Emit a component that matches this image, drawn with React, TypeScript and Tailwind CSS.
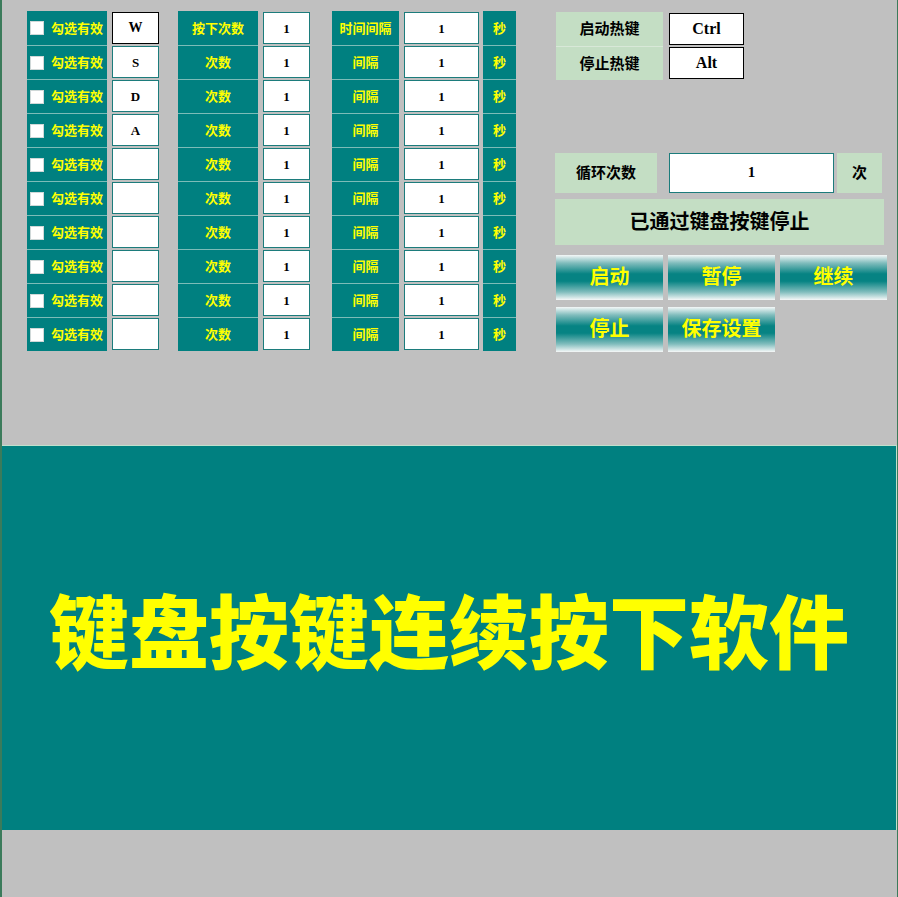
const keys = ["W", "S", "D", "A", "", "", "", "", "", ""];

function TealCell({ w, first, children }: { w: string; first: boolean; children: React.ReactNode }) {
  return (
    <div
      className={
        first
          ? `${w} h-full bg-[#008080] flex items-center justify-center text-[13px] leading-none font-bold text-[#ffff00] pb-[2px]`
          : `${w} h-full bg-[#008080] border-t border-[#7cbcb8] flex items-center justify-center text-[13px] leading-none font-bold text-[#ffff00] pb-[2px]`
      }
    >
      {children}
    </div>
  );
}

function InputCell({ w, value, active }: { w: string; value: string; active?: boolean }) {
  return (
    <div className={`${w} h-full py-px`}>
      <div
        className={
          active
            ? "h-full bg-white border-[1.5px] border-black flex items-center justify-center font-['Liberation_Serif',serif] font-bold text-[14px] leading-none text-black"
            : "h-full bg-white border border-[#1c7c7c] flex items-center justify-center font-['Liberation_Serif',serif] font-bold text-[13px] leading-none text-black"
        }
      >
        {value}
      </div>
    </div>
  );
}

function KeyTable() {
  return (
    <div className="mt-[11px] flex flex-col">
      {keys.map((k, i) => (
        <div key={i} className="h-[34px] flex">
          <TealCell w="w-[80px]" first={i === 0}>
            <div className="w-full flex items-center pl-[3px] gap-[5px]">
              <span className="w-[14px] h-[14px] mt-[2px] bg-white border border-[#cfd8d8] shrink-0" />
              <span className="flex-1 text-center pr-[2px]">勾选有效</span>
            </div>
          </TealCell>
          <div className="ml-[5px]">
            <InputCell w="w-[47px]" value={k} active={i === 0} />
          </div>
          <div className="ml-[19px]">
            <TealCell w="w-[80px]" first={i === 0}>
              {i === 0 ? "按下次数" : "次数"}
            </TealCell>
          </div>
          <div className="ml-[5px]">
            <InputCell w="w-[47px]" value="1" />
          </div>
          <div className="ml-[22px]">
            <TealCell w="w-[67px]" first={i === 0}>
              {i === 0 ? "时间间隔" : "间隔"}
            </TealCell>
          </div>
          <div className="ml-[5px]">
            <InputCell w="w-[75px]" value="1" />
          </div>
          <div className="ml-[4px]">
            <TealCell w="w-[33px]" first={i === 0}>
              秒
            </TealCell>
          </div>
        </div>
      ))}
    </div>
  );
}

function GradButton({ label }: { label: string }) {
  return (
    <div className="w-[107px] h-[45px] bg-[linear-gradient(to_bottom,#f4f8f8_0%,#7fbcbc_18%,#068383_42%,#068383_58%,#7fbcbc_82%,#f6f8f8_100%)] flex items-center justify-center text-[20px] leading-none font-bold text-[#ffff00] pb-[3px]">
      {label}
    </div>
  );
}

function ControlPanel() {
  return (
    <div className="ml-[39px] flex flex-col">
      <div className="mt-[12px] ml-px flex flex-col">
        {[
          ["启动热键", "Ctrl"],
          ["停止热键", "Alt"],
        ].map(([label, val], i) => (
          <div key={label} className="h-[34px] flex">
            <div
              className={
                i === 0
                  ? "w-[107px] bg-[#c4dec4] flex items-center justify-center text-[15px] leading-none font-bold text-black pb-[3px]"
                  : "w-[107px] bg-[#c4dec4] border-t border-[#d8e8d8] flex items-center justify-center text-[15px] leading-none font-bold text-black pb-[3px]"
              }
            >
              {label}
            </div>
            <div className="ml-[6px] w-[75px] py-px">
              <div className="h-full bg-white border-[1.5px] border-black flex items-center justify-center font-['Liberation_Serif',serif] font-bold text-[16px] leading-none text-black">
                {val}
              </div>
            </div>
          </div>
        ))}
      </div>

      <div className="mt-[73px] h-[40px] flex">
        <div className="w-[102px] bg-[#c4dec4] flex items-center justify-center text-[15px] leading-none font-bold text-black pb-[4px]">
          循环次数
        </div>
        <div className="ml-[12px] w-[165px] bg-white border border-[#1c7c7c] flex items-center justify-center font-['Liberation_Serif',serif] font-bold text-[15px] leading-none text-black pb-[2px]">
          1
        </div>
        <div className="ml-[3px] w-[45px] bg-[#c4dec4] flex items-center justify-center text-[15px] leading-none font-bold text-black pb-[4px]">
          次
        </div>
      </div>

      <div className="mt-[6px] w-[329px] h-[46px] bg-[#c4dec4] flex items-center justify-center text-[20px] leading-none font-bold text-black pb-[2px]">
        已通过键盘按键停止
      </div>

      <div className="mt-[10px] ml-px flex gap-[5px]">
        <GradButton label="启动" />
        <GradButton label="暂停" />
        <GradButton label="继续" />
      </div>
      <div className="mt-[7px] ml-px flex gap-[5px]">
        <GradButton label="停止" />
        <GradButton label="保存设置" />
      </div>
    </div>
  );
}

export default function App() {
  return (
    <div className="w-[898px] h-[897px] bg-[#c0c0c0] border-l-2 border-r border-[#3b7b5b] flex flex-col font-['Noto_Sans_CJK_SC',sans-serif]">
      <div className="h-[445px] flex items-start pl-[25px]">
        <KeyTable />
        <ControlPanel />
      </div>
      <div className="h-[385px] bg-[#008080] border-t border-r border-[#bfe0cc] flex items-center justify-center pb-[22px]">
        <h1 className="text-[80px] leading-none font-black text-[#ffff00]">
          键盘按键连续按下软件
        </h1>
      </div>
      <div className="flex-1" />
    </div>
  );
}
